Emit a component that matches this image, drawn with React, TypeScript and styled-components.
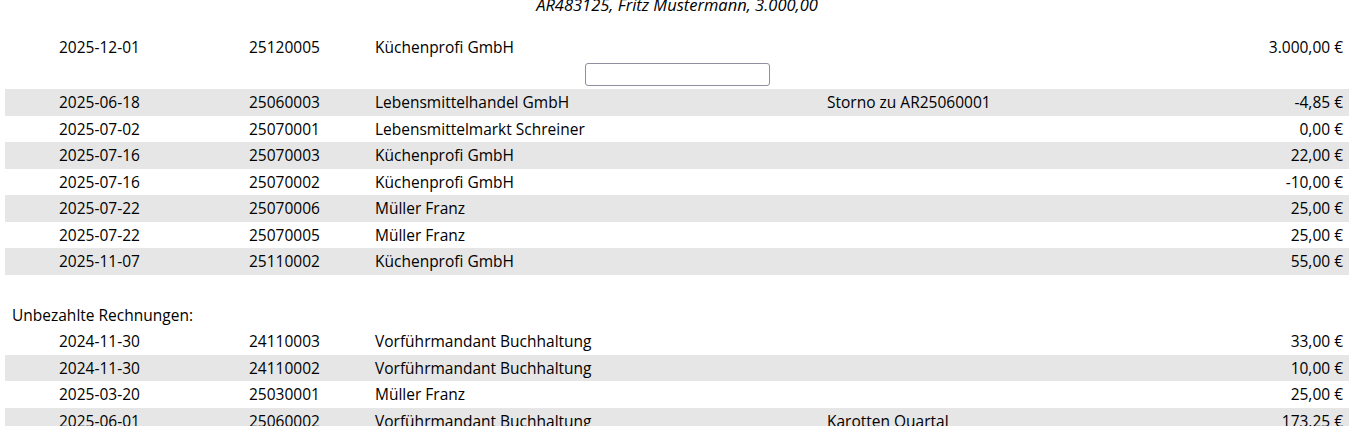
import React from 'react';
import styled, { createGlobalStyle } from 'styled-components';

type Invoice = {
  date: string;
  number: string;
  customer: string;
  note?: string;
  amount: string;
};

const matched: Invoice[] = [
  { date: '2025-06-18', number: '25060003', customer: 'Lebensmittelhandel GmbH', note: 'Storno zu AR25060001', amount: '-4,85 €' },
  { date: '2025-07-02', number: '25070001', customer: 'Lebensmittelmarkt Schreiner', amount: '0,00 €' },
  { date: '2025-07-16', number: '25070003', customer: 'Küchenprofi GmbH', amount: '22,00 €' },
  { date: '2025-07-16', number: '25070002', customer: 'Küchenprofi GmbH', amount: '-10,00 €' },
  { date: '2025-07-22', number: '25070006', customer: 'Müller Franz', amount: '25,00 €' },
  { date: '2025-07-22', number: '25070005', customer: 'Müller Franz', amount: '25,00 €' },
  { date: '2025-11-07', number: '25110002', customer: 'Küchenprofi GmbH', amount: '55,00 €' },
];

const unpaid: Invoice[] = [
  { date: '2024-11-30', number: '24110003', customer: 'Vorführmandant Buchhaltung', amount: '33,00 €' },
  { date: '2024-11-30', number: '24110002', customer: 'Vorführmandant Buchhaltung', amount: '10,00 €' },
  { date: '2025-03-20', number: '25030001', customer: 'Müller Franz', amount: '25,00 €' },
  { date: '2025-06-01', number: '25060002', customer: 'Vorführmandant Buchhaltung', note: 'Karotten Quartal', amount: '173,25 €' },
];

const current: Invoice = {
  date: '2025-12-01',
  number: '25120005',
  customer: 'Küchenprofi GmbH',
  amount: '3.000,00 €',
};

function InvoiceRow({ inv, striped }: { inv: Invoice; striped?: boolean }) {
  return (
    <Row $striped={striped}>
      <Cell>{inv.date}</Cell>
      <Cell>{inv.number}</Cell>
      <Cell>{inv.customer}</Cell>
      <Cell>{inv.note ?? ''}</Cell>
      <Amount>{inv.amount}</Amount>
    </Row>
  );
}

function App() {
  return (
    <Page>
      <GlobalStyle />
      <Title>AR483125, Fritz Mustermann, 3.000,00</Title>
      <InvoiceRow inv={current} />
      <SearchRow>
        <SearchInput type="text" />
      </SearchRow>
      {matched.map((inv, i) => (
        <InvoiceRow key={inv.number} inv={inv} striped={i % 2 === 0} />
      ))}
      <Spacer />
      <Label>Unbezahlte Rechnungen:</Label>
      {unpaid.map((inv, i) => (
        <InvoiceRow key={inv.number} inv={inv} striped={i % 2 === 1} />
      ))}
    </Page>
  );
}

const GlobalStyle = createGlobalStyle`
  html, body {
    margin: 0;
    padding: 0;
    background: #ffffff;
    overflow: hidden;
  }
  body {
    font-family: 'Open Sans', 'Noto Sans', sans-serif;
    color: #000;
  }
`;

const Page = styled.div`
  display: flex;
  flex-direction: column;
  width: 1344px;
  margin-left: 5px;
  font-size: 15.5px;
`;

const Title = styled.div`
  margin: -4px 0 21px;
  height: 17px;
  line-height: 17px;
  font-size: 16.5px;
  text-align: center;
  font-style: italic;
`;

const Row = styled.div<{ $striped?: boolean }>`
  display: grid;
  grid-template-columns: 190px 126px 452px 1fr auto;
  align-items: center;
  height: 26.5px;
  padding: 0 6px 0 54px;
  background: ${(p) => (p.$striped ? '#e6e6e6' : 'transparent')};
  white-space: nowrap;
`;

const Cell = styled.span`
  line-height: 18px;
`;

const Amount = styled.span`
  line-height: 18px;
  text-align: right;
`;

const SearchRow = styled.div`
  display: flex;
  justify-content: center;
  align-items: flex-start;
  height: 28.5px;
  padding-top: 2.5px;
  box-sizing: border-box;
`;

const SearchInput = styled.input`
  width: 185px;
  height: 23px;
  box-sizing: border-box;
  border: 1px solid #8f8f9d;
  border-radius: 3px;
  background: #fff;
  outline: none;
  padding: 0 4px;
`;

const Spacer = styled.div`
  height: 27px;
`;

const Label = styled.div`
  height: 26.5px;
  line-height: 26.5px;
  padding-left: 7px;
`;

export default App;
